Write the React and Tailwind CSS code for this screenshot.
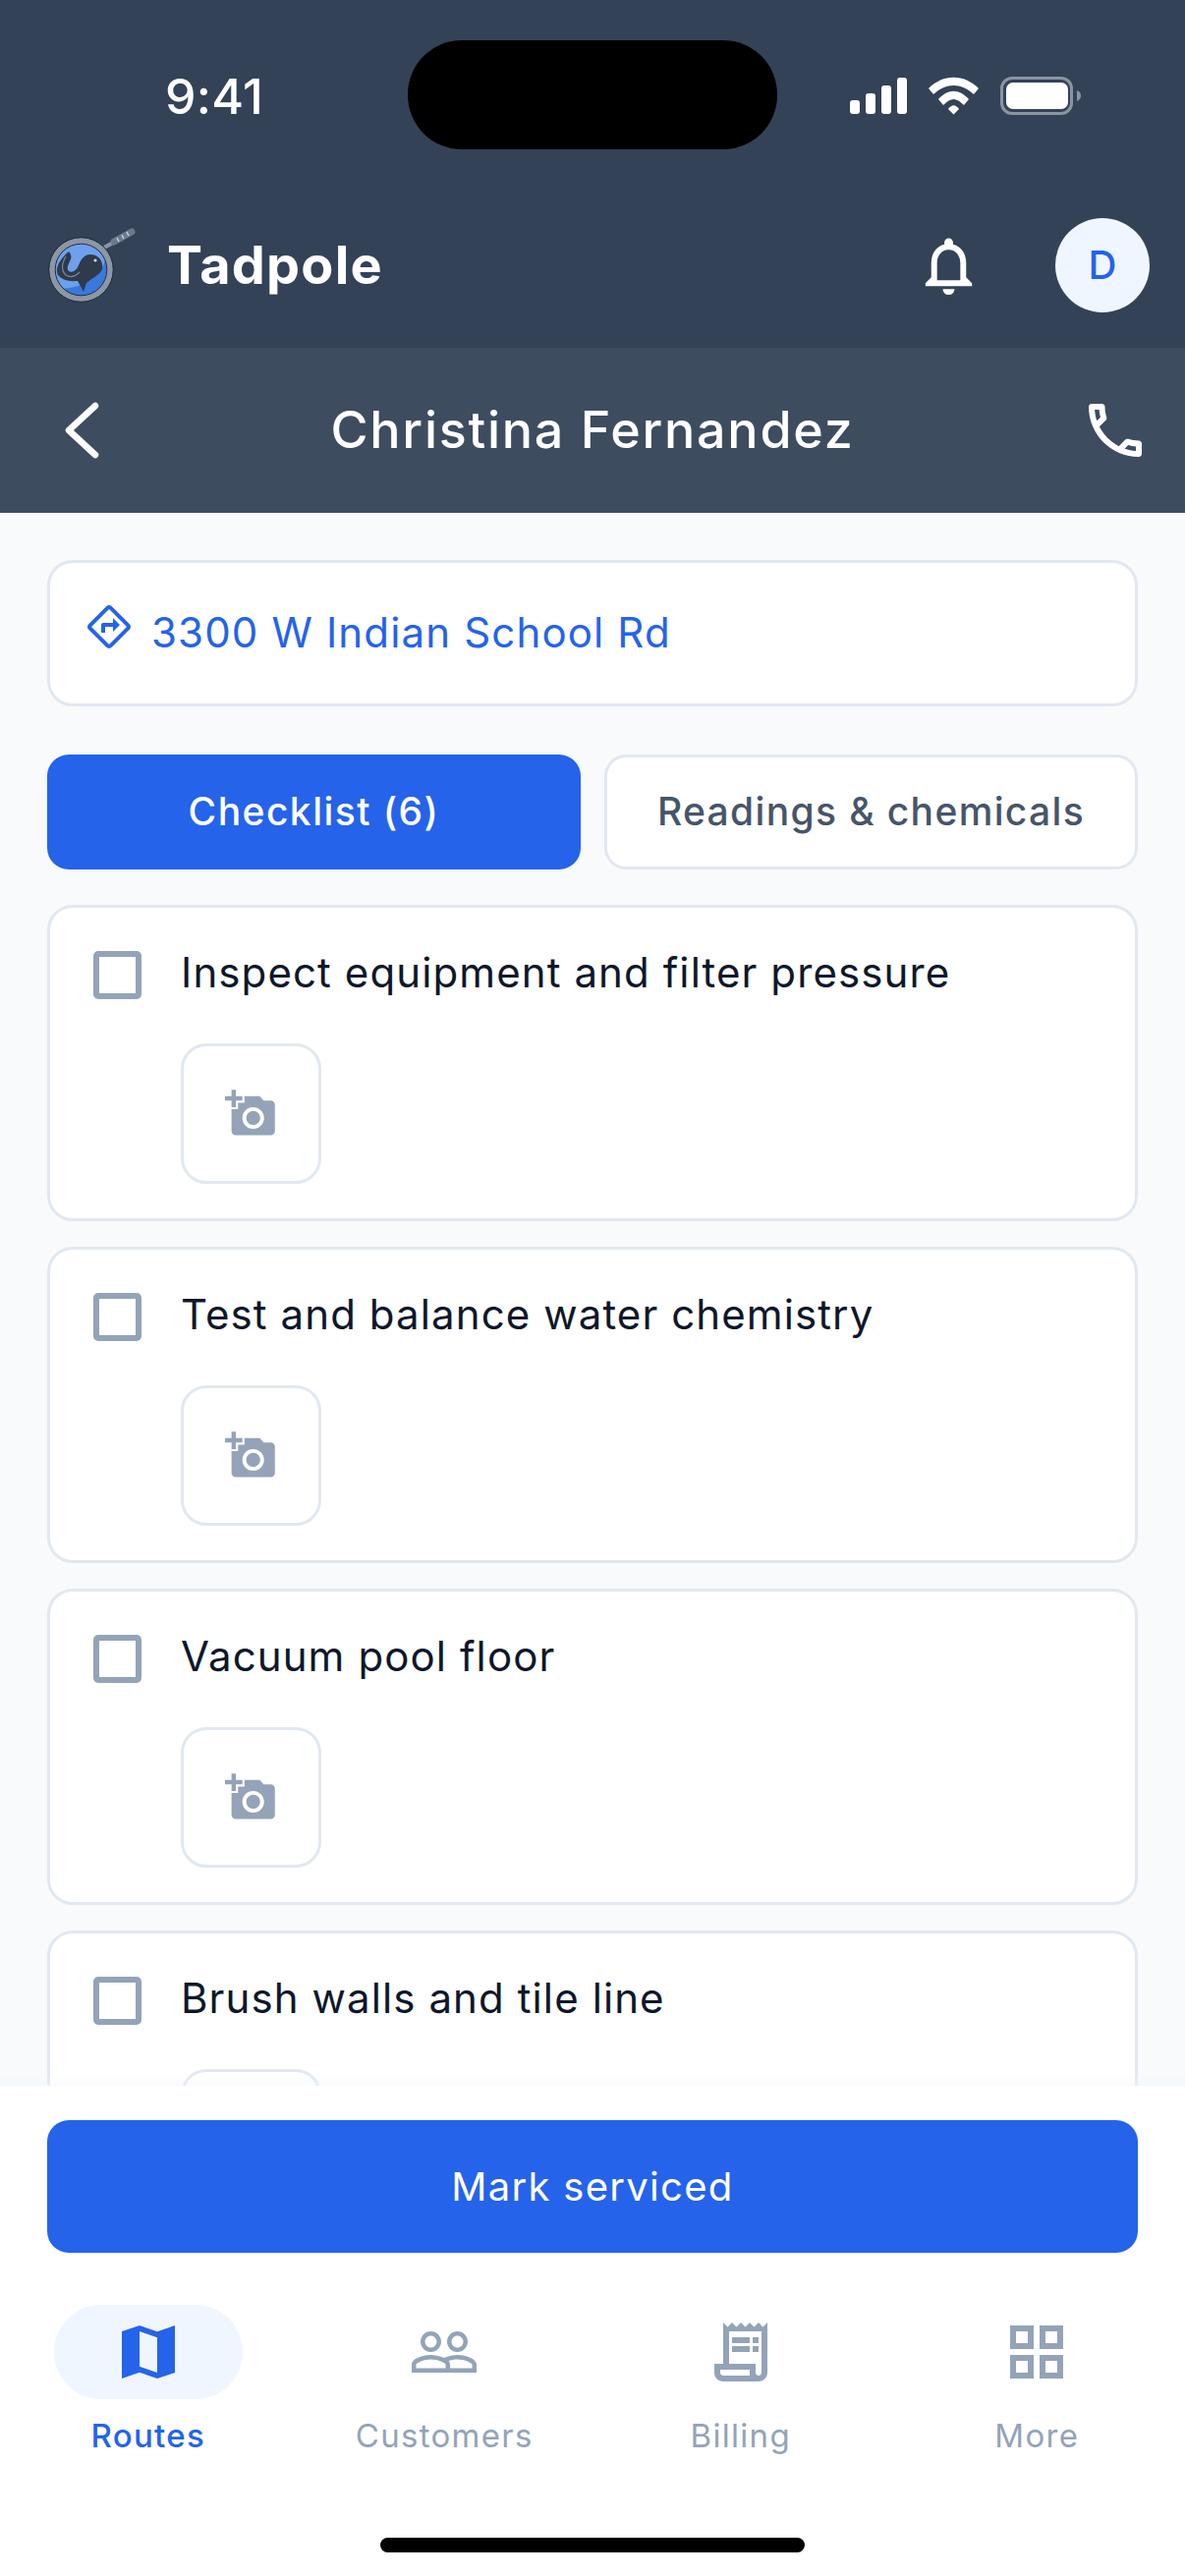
import { MdAddAPhoto, MdNotificationsNone, MdOutlineDirections, MdPeopleOutline, MdOutlineReceiptLong, MdOutlineGridView } from "react-icons/md";

const tasks = [
  "Inspect equipment and filter pressure",
  "Test and balance water chemistry",
  "Vacuum pool floor",
  "Brush walls and tile line",
];

function Logo() {
  return (
    <svg width="90" height="78" viewBox="0 0 90 78" className="shrink-0">
      <path d="M57 21 L66 16" stroke="#8b96a6" strokeWidth="4" />
      <path d="M67 15 L85 5" stroke="#6b7a8d" strokeWidth="7" strokeLinecap="round" />
      <path d="M70 11 L72 15 M75 8 L77 12 M80 5 L82 9" stroke="#c9d1da" strokeWidth="1.500" />
      <circle cx="33.500" cy="43.500" r="27" fill="#6ea0ee" />
      <path d="M15 63 A 27 27 0 0 0 58 33 C 56 44 46 60 15 63Z" fill="#3a78e0" />
      <circle cx="33.500" cy="43.500" r="29.500" fill="none" stroke="#8b96a6" strokeWidth="6" />
      <circle cx="33.500" cy="43.500" r="32.800" fill="none" stroke="#222c3a" strokeWidth="1" />
      <circle cx="33.500" cy="43.500" r="26.300" fill="none" stroke="#222c3a" strokeWidth="1" />
      <path d="M55 38 C54 31 48 28 43 28 C36 28 33 34 31 39 C29 44 25 47 21 45 C18 43 21 37 23 33 C24 30 23 27 21 25 C14 31 8 39 9 46 C10 52 18 56 30 55 L36 66 L39 57 C44 53 48 51 50 49 C54 46 56 43 55 38Z" fill="#2f3a4a" />
      <path d="M18 30 C14 37 13 44 18 49 C23 52 28 50 32 46" fill="none" stroke="#7a8798" strokeWidth="1.200" />
      <circle cx="48" cy="34" r="1.600" fill="#cfd8e3" />
    </svg>
  );
}

function StatusBar() {
  return (
    <div className="relative h-[130px]">
      <div className="absolute left-[168px] top-[71px] text-[50px] leading-[54px] font-medium tracking-[0.3px] text-white">9:41</div>
      <div className="absolute left-[415px] top-[41px] w-[376px] h-[111px] rounded-[55px] bg-black"></div>
      <svg className="absolute left-[865px] top-[78px]" width="236" height="40" viewBox="0 0 236 40">
        <g fill="#fff">
          <rect x="0" y="24" width="10" height="14" rx="3" />
          <rect x="16" y="17" width="10" height="21" rx="3" />
          <rect x="32" y="9" width="10" height="29" rx="3" />
          <rect x="48" y="1" width="10" height="37" rx="3" />
          <path d="M80 12 C95 -3 116 -3 131 12 L126 18 C113 6 98 6 85 18Z" />
          <path d="M90 23 C100 12 111 12 121 23 L116 29 C108 21 103 21 95 29Z" />
          <path d="M100 33 C104 28 107 28 111 33 L105.500 38.500Z" />
          <rect x="159" y="6" width="63" height="27" rx="7" />
        </g>
        <path d="M231 14 C234 15 235 17 235 19.500 C235 22 234 24 231 25Z" fill="#8a94a3" />
        <rect x="154.500" y="1.500" width="71" height="36" rx="10.500" fill="none" stroke="#8a94a3" strokeWidth="3" />
      </svg>
    </div>
  );
}

function ChecklistCard({ label }) {
  return (
    <div className="shrink-0 h-[322px] rounded-[26px] border-[3px] border-[#e2e8f0] bg-white pl-[44px] pr-[40px] pt-[44px]">
      <div className="flex items-start gap-[40px]">
        <div className="w-[49px] h-[49px] shrink-0 rounded-[5px] border-[6px] border-[#94a3b8] bg-white"></div>
        <div className="-mt-[5px] text-[42px] leading-[54px] tracking-[1.1px] text-[#0f172a]">{label}</div>
      </div>
      <div className="ml-[89px] mt-[45px] w-[143px] h-[143px] rounded-[26px] border-[3px] border-[#e2e8f0] flex items-center justify-center">
        <MdAddAPhoto size={53} color="#94a3b8" />
      </div>
    </div>
  );
}

function NavItem({ label, active, children }) {
  return (
    <div className="flex flex-col items-center">
      <div className={`w-[192px] h-[96px] rounded-full flex items-center justify-center ${active ? "bg-[#eff6ff]" : ""}`}>
        {children}
      </div>
      <div className={`mt-[15px] text-[33px] leading-[44px] tracking-[1.3px] ${active ? "font-medium text-[#2563eb]" : "text-[#94a3b8]"}`}>{label}</div>
    </div>
  );
}

export default function App() {
  return (
    <div className="w-[1206px] h-[2622px] flex flex-col overflow-hidden bg-[#f8fafc] font-['Inter',sans-serif]">
      <div className="bg-[#344258] h-[354px] shrink-0">
        <StatusBar />
        <div className="mt-[92px] h-[96px] flex items-center pl-[49px] pr-[36px]">
          <Logo />
          <div className="ml-[31px] text-[54px] leading-[64px] font-bold tracking-[1.2px] text-white">Tadpole</div>
          <div className="ml-auto flex items-center gap-[73px]">
            <MdNotificationsNone size={71} color="#fff" />
            <div className="w-[96px] h-[96px] rounded-full bg-[#eff6ff] flex items-center justify-center text-[40px] font-medium text-[#2563eb]">D</div>
          </div>
        </div>
      </div>

      <div className="bg-[#3e4c60] h-[168px] shrink-0 grid grid-cols-[1fr_auto_1fr] items-center px-[35px]">
        <svg className="ml-[29px]" width="40" height="60" viewBox="0 0 40 60" fill="none" stroke="#fff" strokeWidth="6.500" strokeLinecap="round" strokeLinejoin="round">
          <path d="M33 5 L6 30 L33 55" />
        </svg>
        <div className="text-[52px] leading-[64px] font-medium tracking-[1.75px] text-white">Christina Fernandez</div>
        <svg className="justify-self-end" width="72" height="72" viewBox="0 0 24 24" fill="#fff">
          <path d="M6.540 5c.060.890.210 1.760.450 2.590l-1.200 1.200c-.410-1.200-.670-2.470-.760-3.790h1.510m9.860 12.020c.850.240 1.720.390 2.600.450v1.490c-1.320-.090-2.590-.350-3.800-.750l1.200-1.190M7.500 3H4c-.550 0-1 .450-1 1 0 9.390 7.610 17 17 17 .550 0 1-.450 1-1v-3.490c0-.550-.450-1-1-1-1.240 0-2.450-.200-3.570-.570-.100-.040-.210-.050-.310-.050-.260 0-.510.100-.710.290l-2.200 2.200c-2.830-1.450-5.150-3.760-6.590-6.590l2.200-2.200c.280-.280.360-.670.250-1.020C8.700 6.450 8.500 5.250 8.500 4c0-.550-.450-1-1-1z" />
        </svg>
      </div>

      <div className="relative flex-1 min-h-0 overflow-hidden px-[48px] pt-[48px] flex flex-col">
        <div className="shrink-0 h-[149px] rounded-[26px] border-[3px] border-[#e2e8f0] bg-white flex items-center pl-[36px] gap-[19px]">
          <MdOutlineDirections size={48} color="#2563eb" className="mb-[13px]" />
          <div className="mb-[1px] text-[42px] leading-[54px] tracking-[1.15px] text-[#2563eb]">3300 W Indian School Rd</div>
        </div>

        <div className="shrink-0 mt-[49px] grid grid-cols-2 gap-[24px]">
          <div className="h-[117px] rounded-[22px] bg-[#2563eb] flex items-center justify-center text-[39px] font-medium tracking-[1.45px] text-white">Checklist (6)</div>
          <div className="h-[117px] rounded-[22px] border-[3px] border-[#e2e8f0] bg-white flex items-center justify-center text-[39px] font-medium tracking-[1.35px] text-[#475569]">Readings &amp; chemicals</div>
        </div>

        <div className="mt-[36px] flex flex-col gap-[26px]">
          {tasks.map((task) => (
            <ChecklistCard key={task} label={task} />
          ))}
        </div>
        <div className="absolute left-0 right-0 bottom-0 h-[14px] bg-gradient-to-b from-transparent to-[#f1f5f9]/40"></div>
      </div>

      <div className="shrink-0 h-[499px] bg-white">
        <div className="px-[48px] pt-[35px]">
          <div className="h-[135px] rounded-[22px] bg-[#2563eb] flex items-center justify-center text-[40px] tracking-[1.3px] text-white">Mark serviced</div>
        </div>
        <div className="mt-[53px] grid grid-cols-4">
          <NavItem label="Routes" active>
            <svg width="72" height="72" viewBox="0 0 24 24" fill="#2563eb">
              <path fillRule="evenodd" d="M21 3l-6 2.100L9 3 3 5.020V21l6-2.100 6 2.100 6-2.020V3zM15 19l-6-2.110V5l6 2.110V19z" />
            </svg>
          </NavItem>
          <NavItem label="Customers">
            <MdPeopleOutline size={72} color="#94a3b8" />
          </NavItem>
          <NavItem label="Billing">
            <MdOutlineReceiptLong size={72} color="#94a3b8" />
          </NavItem>
          <NavItem label="More">
            <MdOutlineGridView size={72} color="#94a3b8" />
          </NavItem>
        </div>
        <div className="mt-[82px] mx-auto w-[432px] h-[15px] rounded-full bg-black"></div>
      </div>
    </div>
  );
}
